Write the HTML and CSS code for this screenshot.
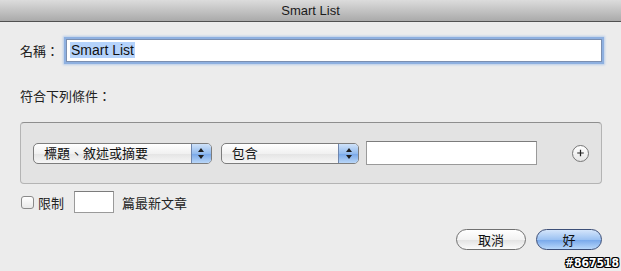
FILE: index.html
```html
<!DOCTYPE html>
<html lang="zh-Hant">
<head>
	<meta charset="UTF-8">
	<title>Smart List</title>
	<link rel="stylesheet" href="styles.css">
</head>
<body>
	<div class='window'>
		<div class='titlebar'>Smart List</div>
		<div class='content'>
			<div class='name-row'>
				<span class='label'>名稱：</span>
				<div class='field focus'><span class='sel'>Smart List</span></div>
			</div>
			<p class='cond-label'>符合下列條件：</p>
			<div class='group'>
				<div class='popup wide'>
					<span class='popup-text'>標題、敘述或摘要</span>
					<span class='stepper'><i class='up'></i><i class='down'></i></span>
				</div>
				<div class='popup mid'>
					<span class='popup-text'>包含</span>
					<span class='stepper'><i class='up'></i><i class='down'></i></span>
				</div>
				<div class='field value'></div>
				<div class='plus'>
					<svg width="16" height="16" viewBox="0 0 16 16">
						<path d="M8 4.5v7M4.5 8h7" stroke="#222" stroke-width="1.3" fill="none"/>
					</svg>
				</div>
			</div>
			<div class='limit-row'>
				<span class='check'></span>
				<span class='limit-text'>限制</span>
				<div class='field count'></div>
				<span class='limit-text'>篇最新文章</span>
			</div>
			<div class='buttons'>
				<button class='btn'>取消</button>
				<button class='btn default'>好</button>
			</div>
		</div>
		<div class='watermark'>#867518</div>
	</div>
</body>
</html>
```

FILE: styles.css
```css
*{
	padding: 0;
	margin: 0;
	box-sizing: border-box;
}
body{
	width: 621px;
	height: 271px;
	overflow: hidden;
	background: #ececec;
	font-family: "Liberation Sans", "Noto Sans CJK TC", sans-serif;
	font-size: 13px;
	color: #111;
}
.window{
	position: relative;
	height: 271px;
}
.titlebar{
	height: 22px;
	line-height: 21px;
	text-align: center;
	font-size: 13px;
	color: #1a1a1a;
	background: linear-gradient(#dcdcdc, #aaaaaa);
	border-bottom: 1px solid #515151;
}
.content{
	padding: 16px 19px 0 20px;
}
.name-row{
	display: flex;
	align-items: center;
	height: 24px;
}
.label{
	width: 46px;
	color: #222;
}
.field{
	background: #fff;
	border: 1px solid #9a9a9a;
	border-top-color: #7c7c7c;
}
.field.focus{
	flex: 1;
	height: 23px;
	padding: 2px 3px;
	border-color: #7b8fb0;
	box-shadow: 0 0 0 2px #8eb0e0, 0 0 2px 3px #b9cdea;
	font-size: 14px;
	line-height: 17px;
}
.sel{
	background: #b5d3fb;
	padding: 0 1px;
}
.cond-label{
	margin-top: 26px;
	height: 18px;
	line-height: 18px;
	color: #222;
}
.group{
	margin-top: 16px;
	height: 62px;
	display: flex;
	align-items: center;
	padding: 0 12px;
	background: #e3e3e3;
	border: 1px solid #b4b4b4;
	border-top-color: #8e8e8e;
	border-radius: 4px;
}
.popup{
	display: flex;
	height: 21px;
	border: 1px solid #7d7d7d;
	border-radius: 5px;
	background: linear-gradient(#ffffff, #f1f1f1 50%, #e4e4e4 51%, #f6f6f6);
	overflow: hidden;
}
.popup.wide{
	width: 179px;
}
.popup.mid{
	width: 139px;
	margin-left: 9px;
}
.popup-text{
	flex: 1;
	padding-left: 10px;
	line-height: 19px;
	color: #111;
}
.stepper{
	width: 20px;
	display: flex;
	flex-direction: column;
	align-items: center;
	justify-content: center;
	gap: 3px;
	border-left: 1px solid #6f86ad;
	background: linear-gradient(#cfe2f9, #93bbee 50%, #76a6e8 51%, #b9d6f7);
}
.up, .down{
	width: 0;
	height: 0;
	border-left: 3px solid transparent;
	border-right: 3px solid transparent;
}
.up{
	border-bottom: 4px solid #1e1e1e;
}
.down{
	border-top: 4px solid #1e1e1e;
}
.field.value{
	width: 171px;
	height: 24px;
	margin-left: 7px;
}
.plus{
	width: 17px;
	height: 17px;
	margin-left: 35px;
	border: 1px solid #777;
	border-radius: 50%;
	background: linear-gradient(#ffffff, #e6e6e6);
	display: flex;
	align-items: center;
	justify-content: center;
}
.plus svg{
	display: block;
}
.limit-row{
	margin-top: 7px;
	display: flex;
	align-items: center;
	height: 22px;
}
.check{
	width: 13px;
	height: 13px;
	margin-left: 1px;
	border: 1px solid #8a8a8a;
	border-radius: 3px;
	background: linear-gradient(#ffffff, #e9e9e9);
}
.limit-text{
	margin-left: 4px;
	color: #222;
}
.field.count{
	width: 40px;
	height: 22px;
	margin: 0 4px 0 10px;
}
.buttons{
	margin-top: 16px;
	display: flex;
	justify-content: flex-end;
	gap: 10px;
}
.btn{
	height: 21px;
	width: 70px;
	border: 1px solid #707070;
	border-radius: 11px;
	background: linear-gradient(#ffffff, #f2f2f2 50%, #e2e2e2 51%, #fbfbfb);
	font-family: "Liberation Sans", "Noto Sans CJK TC", sans-serif;
	font-size: 13px;
	color: #111;
}
.btn.default{
	width: 66px;
	border-color: #3d4f78;
	background: linear-gradient(#d4e5fb, #9cc2f2 50%, #75a6ea 51%, #b8d7fa);
}
.watermark{
	position: absolute;
	right: 2px;
	bottom: 1px;
	font-family: "DejaVu Sans Condensed", "DejaVu Sans", sans-serif;
	font-weight: bold;
	font-size: 12px;
	color: #fff;
	text-shadow: 1px 0 0 #000, -1px 0 0 #000, 0 1px 0 #000, 0 -1px 0 #000, 1px 1px 0 #000, -1px -1px 0 #000, 1px -1px 0 #000, -1px 1px 0 #000;
}
```
